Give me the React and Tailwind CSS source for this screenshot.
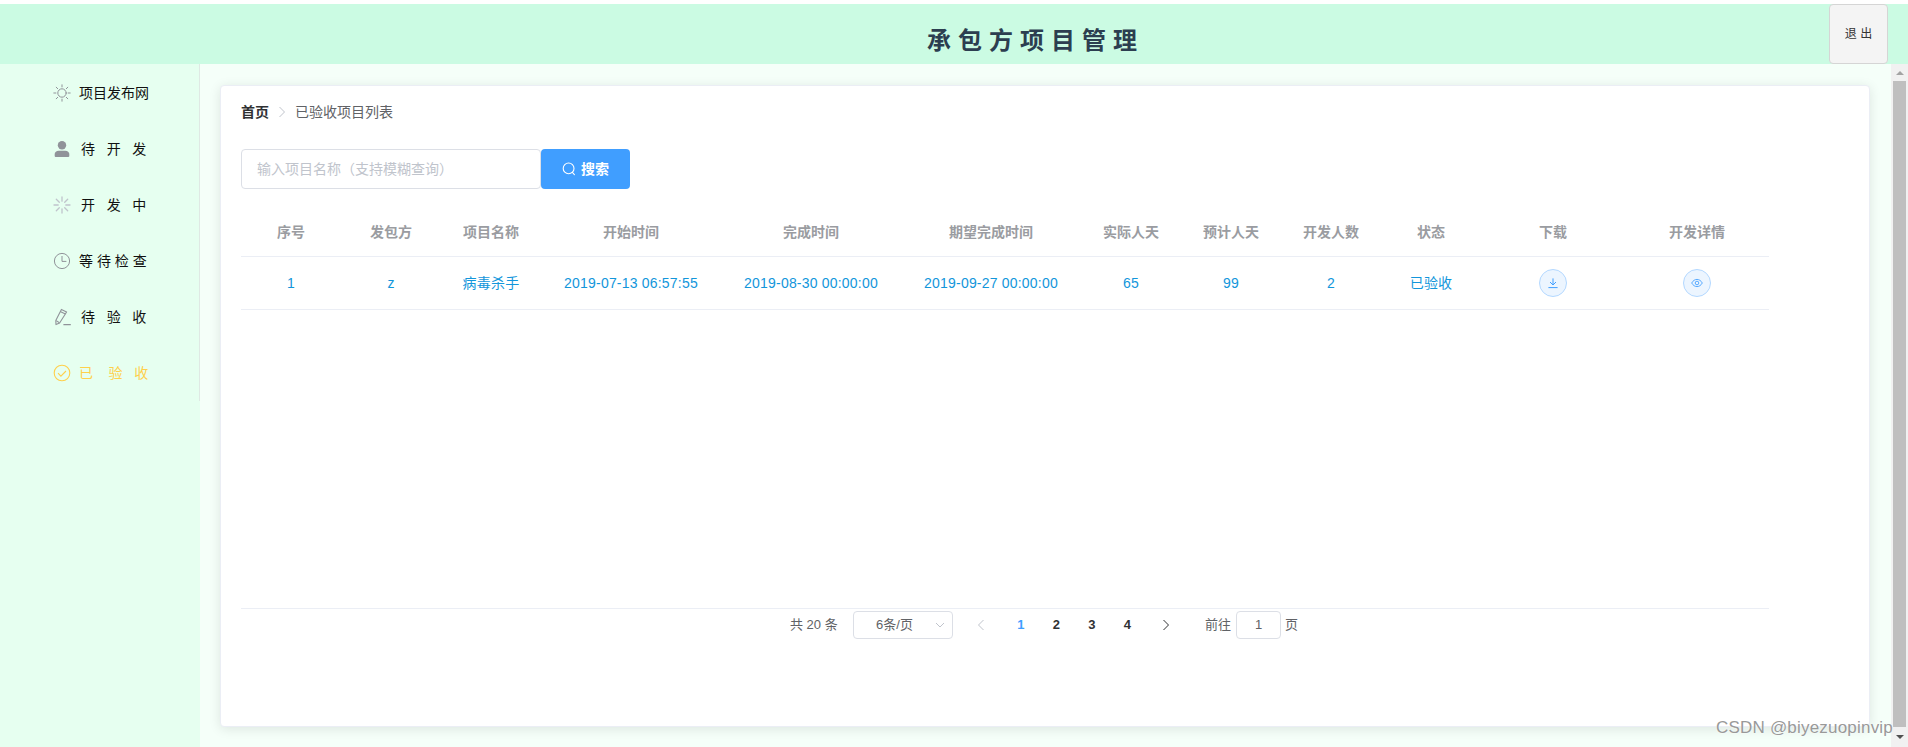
const COLS = "grid grid-cols-[100px_100px_100px_180px_180px_180px_100px_100px_100px_100px_144px_144px]";
const FONT = "[font-family:'Liberation_Sans','Noto_Sans_CJK_SC',sans-serif]";

function Sun() {
  return (
    <svg viewBox="0 0 18 18" className="w-[18px] h-[18px]" fill="none" stroke="currentColor" strokeWidth="1" strokeLinecap="round">
      <circle cx="9" cy="9" r="4.2" />
      <path d="M9 .8v2.1M9 15.1v2.1M.8 9h2.1M15.1 9h2.1M3.2 3.2l1.5 1.5M13.3 13.3l1.5 1.5M3.2 14.8l1.5-1.5M13.3 4.7l1.5-1.5" />
    </svg>
  );
}
function UserSolid() {
  return (
    <svg viewBox="0 0 18 18" className="w-[18px] h-[18px]" fill="currentColor">
      <circle cx="9" cy="5.2" r="4.2" />
      <path d="M2.6 17c-.5 0-.9-.4-.9-.9v-2c0-2 1.8-3.4 4-3.4h6.6c2.2 0 4 1.4 4 3.4v2c0 .5-.4.9-.9.9z" />
    </svg>
  );
}
function Spinner() {
  return (
    <svg viewBox="0 0 18 18" className="w-[18px] h-[18px]" fill="none" stroke="#c0c4cc" strokeWidth="1.3" strokeLinecap="round">
      <path d="M9 1v4.2M9 12.8V17M1 9h4.2M12.8 9H17M3.3 3.3l3 3M11.7 11.7l3 3M3.3 14.7l3-3M11.7 6.3l3-3" />
    </svg>
  );
}
function Clock() {
  return (
    <svg viewBox="0 0 18 18" className="w-[18px] h-[18px]" fill="none" stroke="currentColor" strokeWidth="1">
      <circle cx="9" cy="9" r="7.6" />
      <path d="M9 4v5.4h4.4" />
    </svg>
  );
}
function Pencil() {
  return (
    <svg viewBox="0 0 18 18" className="w-[18px] h-[18px]" fill="none" stroke="currentColor" strokeWidth="1.1">
      <path d="M8.4 1.4 13.6 4 6.6 15 3 16.6 2.8 12.4z" strokeLinejoin="round" />
      <path d="M7.2 3.4 12.4 6M3.2 12.6l3.2 2.2M10.4 16.6h7.4" />
    </svg>
  );
}
function CheckCircle() {
  return (
    <svg viewBox="0 0 18 18" className="w-[18px] h-[18px]" fill="none" stroke="currentColor" strokeWidth="1.1">
      <circle cx="9" cy="9" r="7.8" />
      <path d="M5 9.2l2.9 2.9L13 7" />
    </svg>
  );
}
function SearchIcon() {
  return (
    <svg viewBox="0 0 14 14" className="w-[14px] h-[14px]" fill="none" stroke="currentColor" strokeWidth="1.1" strokeLinecap="round">
      <circle cx="6.6" cy="6.4" r="5.4" />
      <path d="M10.4 10.4l2 2.2" />
    </svg>
  );
}
function DownloadIcon() {
  return (
    <svg viewBox="0 0 12 12" className="w-3 h-3" fill="none" stroke="currentColor" strokeWidth="1">
      <path d="M6 1.4v6.2M3 5l3 3 3-3M1.4 10.6h9.2" />
    </svg>
  );
}
function EyeIcon() {
  return (
    <svg viewBox="0 0 14 12" className="w-3 h-3" fill="none" stroke="currentColor" strokeWidth="1">
      <path d="M.8 6C2.4 3.2 4.6 1.8 7 1.8S11.6 3.2 13.2 6C11.6 8.8 9.4 10.2 7 10.2S2.4 8.8.8 6z" />
      <circle cx="7" cy="6" r="2.1" />
    </svg>
  );
}
function Chevron({ dir = "right", className = "" }) {
  return (
    <svg viewBox="0 0 8 12" className={"w-2 h-3 " + className} fill="none" stroke="currentColor" strokeWidth="1">
      <path d={dir === "right" ? "M1.5 1 6.5 6l-5 5" : "M6.5 1 1.5 6l5 5"} />
    </svg>
  );
}

const menu = [
  { icon: <Sun />, label: "项目发布网" },
  { icon: <UserSolid />, label: "待\u00a0\u00a0\u00a0开\u00a0\u00a0\u00a0发", inset: true },
  { icon: <Spinner />, label: "开\u00a0\u00a0\u00a0发\u00a0\u00a0\u00a0中", inset: true },
  { icon: <Clock />, label: "等\u00a0待\u00a0检\u00a0查" },
  { icon: <Pencil />, label: "待\u00a0\u00a0\u00a0验\u00a0\u00a0\u00a0收", inset: true },
  { icon: <CheckCircle />, label: "已\u00a0\u00a0\u00a0\u00a0验\u00a0\u00a0\u00a0收", active: true },
];

const heads = ["序号", "发包方", "项目名称", "开始时间", "完成时间", "期望完成时间", "实际人天", "预计人天", "开发人数", "状态", "下载", "开发详情"];
const cells = ["1", "z", "病毒杀手", "2019-07-13 06:57:55", "2019-08-30 00:00:00", "2019-09-27 00:00:00", "65", "99", "2", "已验收"];

function RoundBtn({ children }) {
  return (
    <button className="w-7 h-7 rounded-full bg-[#ecf5ff] border border-[#b3d8ff] text-[#409eff] flex items-center justify-center">
      {children}
    </button>
  );
}

export default function App() {
  return (
    <div className={"relative w-full h-[747px] overflow-hidden bg-white pt-1 " + FONT}>
      <header className="h-[60px] bg-[#cbfbe3] flex">
        <div className="flex-1 flex items-center justify-center pl-[242px]">
          <h1 className="text-[24px] font-bold tracking-[7px] text-[#2c3e50] leading-none mt-[14px]">承包方项目管理</h1>
        </div>
        <button className="w-[59px] h-[60px] mr-5 bg-[#f4f4f4] border border-[#d5d5d5] rounded text-[12px] text-[#333]">退&nbsp;出</button>
      </header>

      <div className="flex h-[683px]">
        <aside className="w-[200px] shrink-0 bg-[#e6fff0]">
          <nav className="border-r border-[#dfe9e4] pt-px">
            {menu.map((m) => (
              <div
                key={m.label}
                className={"h-14 flex items-center pl-[50px] text-[14px] " + (m.active ? "text-[#ffd04b]" : "text-[#111]")}
              >
                <span className={"w-6 flex justify-center mr-[5px] " + (m.active ? "text-[#ffd04b]" : "text-[#909399]")}>{m.icon}</span>
                <span className={m.inset ? "ml-[2px]" : ""}>{m.label}</span>
              </div>
            ))}
          </nav>
        </aside>

        <main className="flex-1 bg-[#f5fff9] pl-5 pr-[21px] pt-[21px] pb-5 min-w-0">
          <section className="h-full bg-white rounded border border-[#ebeef5] shadow-[0_2px_12px_rgba(0,0,0,0.1)] pl-5 pt-[19px]">
            <div className="flex items-center h-[14px] text-[14px] leading-none">
              <span className="font-bold text-[#303133]">首页</span>
              <Chevron className="mx-[9px] text-[#c0c4cc]" />
              <span className="text-[#606266]">已验收项目列表</span>
            </div>

            <div className="flex mt-[30px]">
              <div className="w-[300px] h-10 border border-[#dcdfe6] rounded flex items-center pl-[15px] text-[14px] text-[#c0c4cc]">
                输入项目名称（支持模糊查询）
              </div>
              <button className="w-[89px] h-10 bg-[#409eff] rounded text-white text-[14px] font-bold flex items-center justify-center gap-[5px]">
                <SearchIcon />
                搜索
              </button>
            </div>

            <div className="w-[1528px] h-[401px] mt-[19px] border-b border-[#ebeef5]">
              <div className={COLS + " h-[49px] border-b border-[#ebeef5] text-[14px] font-bold text-[#9a9ca1]"}>
                {heads.map((h) => (
                  <div key={h} className="flex items-center justify-center">{h}</div>
                ))}
              </div>
              <div className={COLS + " h-[53px] border-b border-[#ebeef5] text-[14px] text-[#1296db] tracking-[0.2px]"}>
                {cells.map((c) => (
                  <div key={c} className="flex items-center justify-center">{c}</div>
                ))}
                <div className="flex items-center justify-center"><RoundBtn><DownloadIcon /></RoundBtn></div>
                <div className="flex items-center justify-center"><RoundBtn><EyeIcon /></RoundBtn></div>
              </div>
            </div>

            <div className="flex items-center h-7 mt-[2px] ml-[549px] text-[13px] text-[#606266]">
              <span className="w-[48px] whitespace-nowrap">共 20 条</span>
              <div className="relative ml-[15px] w-[100px] h-7 border border-[#dcdfe6] rounded flex items-center justify-center pr-[17px]">
                6条/页
                <svg viewBox="0 0 10 6" className="absolute right-[7px] top-[10px] w-[10px] h-[6px] text-[#c0c4cc]" fill="none" stroke="currentColor" strokeWidth="1">
                  <path d="M1 1l4 4 4-4" />
                </svg>
              </div>
              <div className="ml-[10px] w-9 flex justify-center text-[#c0c4cc]"><Chevron dir="left" /></div>
              <ul className="flex ml-1 font-bold text-[#303133]">
                <li className="w-[35.5px] text-center text-[#409eff]">1</li>
                <li className="w-[35.5px] text-center">2</li>
                <li className="w-[35.5px] text-center">3</li>
                <li className="w-[35.5px] text-center">4</li>
              </ul>
              <div className="ml-[3px] w-9 flex justify-center text-[#303133]"><Chevron /></div>
              <span className="ml-[21px]">前往</span>
              <div className="ml-[5px] w-[45px] h-7 border border-[#dcdfe6] rounded flex items-center justify-center">1</div>
              <span className="ml-1">页</span>
            </div>
          </section>
        </main>

        <div className="w-[17px] shrink-0 bg-[#f1f1f1] flex flex-col">
          <div className="h-[17px] flex items-center justify-center">
            <svg viewBox="0 0 8 4" className="w-2 h-1 text-[#a3a3a3]" fill="currentColor"><path d="M4 0l4 4H0z" /></svg>
          </div>
          <div className="flex-1 mx-[2px] bg-[#bfbfbf]" />
          <div className="h-[20px] flex items-center justify-center">
            <svg viewBox="0 0 8 4" className="w-2 h-1 text-[#505050]" fill="currentColor"><path d="M0 0h8L4 4z" /></svg>
          </div>
        </div>
      </div>

      <div className="absolute left-[1716px] top-[718px] text-[17px] tracking-[0.2px] leading-[20px] text-[#999] whitespace-nowrap [text-shadow:0_0_2px_#fff]">
        CSDN @biyezuopinvip
      </div>
    </div>
  );
}
